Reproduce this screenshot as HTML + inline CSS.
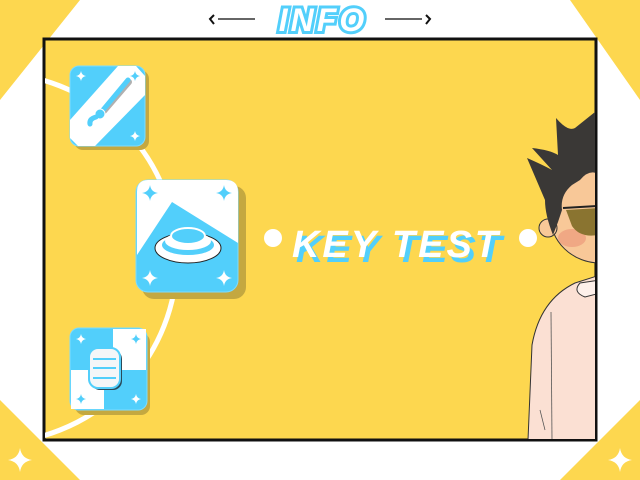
<!DOCTYPE html>
<html><head><meta charset="utf-8">
<style>
html,body{margin:0;padding:0;width:640px;height:480px;overflow:hidden;background:#fff;font-family:"Liberation Sans",sans-serif}
</style></head>
<body>
<svg width="640" height="480" viewBox="0 0 640 480" xmlns="http://www.w3.org/2000/svg" style="position:absolute;left:0;top:0">
<defs>
<clipPath id="fc"><rect x="45" y="40" width="550" height="399"/></clipPath>
<path id="st" d="M0,-8 Q1,-1 8,0 Q1,1 0,8 Q-1,1 -8,0 Q-1,-1 0,-8Z"/>
<path id="sm" d="M0,-5 Q0.7,-0.7 5,0 Q0.7,0.7 0,5 Q-0.7,0.7 -5,0 Q-0.7,-0.7 0,-5Z"/>
</defs>
<polygon points="0,0 80,0 0,100" fill="#fdd74f"/>
<polygon points="570,0 640,0 640,100" fill="#fdd74f"/>
<polygon points="0,400 80,480 0,480" fill="#fdd74f"/>
<polygon points="640,400 560,480 640,480" fill="#fdd74f"/>
<g transform="translate(620,460) scale(1.5)"><use href="#st" fill="#fff"/></g>
<g transform="translate(20,460) scale(1.5)"><use href="#st" fill="#fff"/></g>
<text x="323" y="31" text-anchor="middle" font-family="Liberation Sans" font-weight="bold" font-style="italic" font-size="32" fill="#fff" stroke="#52cffb" stroke-width="6" paint-order="stroke" letter-spacing="3">INFO</text>
<line x1="218" y1="19" x2="255" y2="19" stroke="#666" stroke-width="2"/>
<line x1="385" y1="19" x2="422" y2="19" stroke="#666" stroke-width="2"/>
<path d="M214,15 L210,19 L214,24" stroke="#111" stroke-width="2" fill="none"/>
<path d="M426,15 L430,19 L426,24" stroke="#111" stroke-width="2" fill="none"/>
<rect x="44" y="39" width="552" height="401" fill="#fdd74f" stroke="#111" stroke-width="3"/>
<g clip-path="url(#fc)">
<circle cx="-8" cy="258" r="185" fill="none" stroke="#fff" stroke-width="5"/>
<!-- card1 -->
<rect x="74" y="70" width="75" height="80" rx="9" fill="#c4a840"/>
<rect x="70" y="66" width="75" height="80" rx="9" fill="#52cffb" stroke="#7cdcff" stroke-width="1"/>
<polygon points="118,66 136,66 145,76 145,95 95,146 78,146 70,138 70,120" fill="#fff"/>
<path d="M129,82 L104,111" stroke="#b0b0b0" stroke-width="6" stroke-linecap="round"/>
<path d="M128,80 L103,110" stroke="#52cffb" stroke-width="5" stroke-linecap="round"/>
<circle cx="100" cy="114" r="5" fill="#52cffb" stroke="#fff" stroke-width="1"/>
<path d="M96,117 Q89,119 90,124" stroke="#52cffb" stroke-width="5" stroke-linecap="round" fill="none"/>
<use href="#sm" x="81" y="76" fill="#fff"/><use href="#sm" x="135" y="76" fill="#52cffb"/>
<use href="#sm" x="81" y="136" fill="#fff"/><use href="#sm" x="135" y="136" fill="#fff"/>
<!-- card2 -->
<rect x="142" y="186" width="104" height="113" rx="12" fill="#c4a840"/>
<rect x="136" y="180" width="102" height="112" rx="12" fill="#52cffb" stroke="#7cdcff"/>
<path d="M148,180 L226,180 Q238,180 238,192 L238,243 L172,202 L137,255 L137,192 Q137,180 148,180Z" fill="#fff"/>
<ellipse cx="188" cy="248" rx="33" ry="15" fill="#fff" stroke="#222" stroke-width="1"/>
<ellipse cx="188" cy="245" rx="26" ry="10" fill="#52cffb"/>
<ellipse cx="188" cy="241" rx="23" ry="9" fill="#fff"/>
<ellipse cx="188" cy="236" rx="17" ry="8" fill="#52cffb" stroke="#fff" stroke-width="2"/>
<use href="#st" x="150" y="193" fill="#52cffb"/><use href="#st" x="224" y="193" fill="#52cffb"/>
<use href="#st" x="150" y="278" fill="#fff"/><use href="#st" x="224" y="278" fill="#fff"/>
<!-- card3 -->
<rect x="75" y="333" width="75" height="82" rx="9" fill="#c4a840"/>
<rect x="70" y="328" width="77" height="82" rx="9" fill="#52cffb" stroke="#7cdcff"/>
<rect x="113" y="329" width="33" height="41" fill="#fff"/>
<rect x="71" y="370" width="33" height="39" fill="#fff"/>
<rect x="91" y="350" width="31" height="40" rx="9" fill="#2a4a5a"/>
<rect x="89" y="348" width="31" height="40" rx="9" fill="#f4f6f8" stroke="#52cffb" stroke-width="2"/>
<line x1="93" y1="359" x2="116" y2="359" stroke="#52cffb" stroke-width="2"/>
<line x1="93" y1="368" x2="116" y2="368" stroke="#52cffb" stroke-width="2"/>
<line x1="93" y1="378" x2="116" y2="378" stroke="#52cffb" stroke-width="2"/>
<use href="#sm" x="81" y="339" fill="#fff"/><use href="#sm" x="136" y="339" fill="#52cffb"/>
<use href="#sm" x="81" y="399" fill="#52cffb"/><use href="#sm" x="136" y="399" fill="#fff"/>
<!-- key test -->
<circle cx="273" cy="238" r="9" fill="#fff"/>
<circle cx="528" cy="238" r="9" fill="#fff"/>
<text x="296" y="262" font-weight="bold" font-style="italic" font-size="38" fill="#52cffb" letter-spacing="4" textLength="210">KEY TEST</text>
<text x="292" y="257" font-weight="bold" font-style="italic" font-size="38" fill="#fff" letter-spacing="4" textLength="210">KEY TEST</text>
<!-- character -->
<path d="M528,440 L532,345 Q540,300 575,283 L600,275 L600,440Z" fill="#fbe0d3" stroke="#333" stroke-width="1"/>
<path d="M580,283 Q572,292 585,297 L600,293 L600,280Z" fill="#fdf0ea" stroke="#333" stroke-width="1"/>
<path d="M551,312 L552,440" stroke="#555" stroke-width="0.8" fill="none"/>
<path d="M540,410 L545,430" stroke="#555" stroke-width="0.8" fill="none"/>
<ellipse cx="600" cy="215" rx="50" ry="48" fill="#f8c898" stroke="#333" stroke-width="1"/>
<circle cx="548" cy="228" r="9" fill="#f8c898" stroke="#333" stroke-width="1"/>
<ellipse cx="572" cy="238" rx="14" ry="9" fill="#eea080" opacity="0.8"/>
<path d="M566,210 L598,208 L598,235 Q580,238 572,226Z" fill="#8a7430"/>
<path d="M563,208 L598,206" stroke="#222" stroke-width="2"/>
<path d="M553,235 Q545,215 545,200 L527,158 Q543,165 552,170 L532,148 Q550,150 558,155 L556,118 Q568,132 575,128 L600,108 L600,175 Q590,168 580,180 L572,185 Q560,195 562,210 L558,222Z" fill="#3a3836"/>
</g>
</svg>
</body></html>
